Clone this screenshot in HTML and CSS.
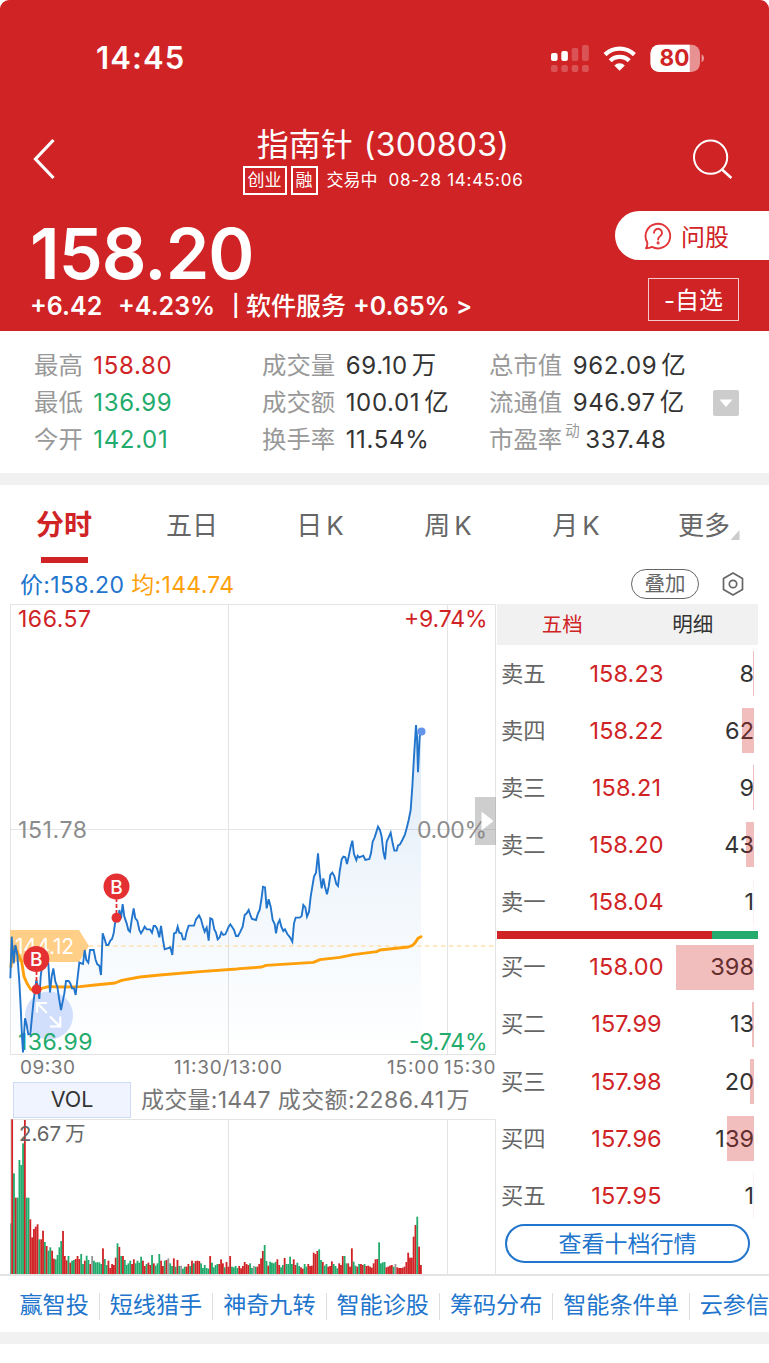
FILE: index.html
```html
<!DOCTYPE html>
<html lang="zh-CN">
<head>
<meta charset="utf-8">
<title>指南针 (300803)</title>
<link rel="stylesheet" href="styles.css">
</head>
<body>
<div class="screen">
  <header class="hero">
    <div class="status">
      <span class="clock">14:45</span>
      <svg class="status-icons" width="154" height="30" viewBox="550 42 154 30">
        <g fill="#fff">
          <rect x="551" y="52" width="6.6" height="8" rx="2"/>
          <rect x="561.3" y="50" width="6.6" height="10" rx="2"/>
          <g opacity=".22">
            <rect x="571.7" y="47" width="6.6" height="13" rx="2"/>
            <rect x="582" y="44" width="6.8" height="16" rx="2"/>
            <rect x="551" y="64" width="6.6" height="7" rx="2"/>
            <rect x="561.3" y="64" width="6.6" height="7" rx="2"/>
            <rect x="571.7" y="64" width="6.6" height="7" rx="2"/>
            <rect x="582" y="64" width="6.8" height="7" rx="2"/>
          </g>
          <path d="M614.3 64.4a7.6 7.6 0 0 1 10.500 0L619.600 69.800z"/>
        </g>
        <g fill="none" stroke="#fff" stroke-width="4.300">
          <path d="M605 53.600a21.200 21.200 0 0 1 29.400 0"/>
          <path d="M610.200 59.700a13.600 13.600 0 0 1 19 0"/>
        </g>
        <clipPath id="battery"><rect x="650.5" y="43.7" width="49.5" height="27.2" rx="8.5"/></clipPath>
        <g clip-path="url(#battery)" fill="#fff">
          <rect x="650" y="43" width="50" height="28" opacity=".5"/>
          <rect x="650" y="43" width="39.7" height="28"/>
        </g>
        <path d="M701.6 53.2q2.4 1.2 2.4 4t-2.4 4z" fill="#fff" opacity=".55"/>
        <text x="659.5" y="65.3" textLength="30" class="battery-text">80</text>
      </svg>
    </div>
    <div class="nav">
      <svg class="back" width="24" height="42" viewBox="0 0 24 42"><path d="M20.500 2L2.500 21L20.500 40" fill="none" stroke="#fff" stroke-width="3.200"/></svg>
      <div class="title">
        <h1>指南针 <span>(300803)</span></h1>
        <div class="subtitle"><span class="tag">创业</span><span class="tag">融</span><span class="state">交易中</span><span class="stamp">08-28 14:45:06</span></div>
      </div>
      <svg class="search" width="42" height="42" viewBox="0 0 42 42" fill="none" stroke="#fff" stroke-width="2"><circle cx="18.6" cy="18.2" r="16.6"/><path d="M30 30.5L39.4 39" stroke-width="2.5"/></svg>
    </div>
    <div class="quote">
      <div class="quote-left">
        <div class="last">158.20</div>
        <div class="change"><span class="c1">+6.42</span><span class="c2">+4.23%</span><span class="c3">|</span><span class="c4">软件服务</span><span class="c5">+0.65%</span><span class="c6">&gt;</span></div>
      </div>
      <div class="quote-right">
        <div class="ask">
          <svg width="28" height="28" viewBox="0 0 28 28" fill="none" stroke="#e23538" stroke-width="1.9"><path d="M3.2 20.2A12.3 12.3 0 1 1 8 24.9C6.400 25.700 4.500 26.200 2 26.200C3.200 24.500 3.600 22.500 3.200 20.200z" stroke-linejoin="round"/><path d="M10 10.700a4 4 0 1 1 6.100 3.500c-1.500.9-2 1.500-2 3.300" stroke-linecap="round"/><circle cx="14.100" cy="20.900" r=".6" fill="#e23538"/></svg>
          <span>问股</span>
        </div>
        <div class="watch">-自选</div>
      </div>
    </div>
  </header>

  <section class="stats">
    <div class="stat"><span>最高</span><b class="up">158.80</b></div>
    <div class="stat"><span>成交量</span><b>69.10<i>万</i></b></div>
    <div class="stat"><span>总市值</span><b>962.09<i>亿</i></b></div>
    <div class="stat"><span>最低</span><b class="down">136.99</b></div>
    <div class="stat"><span>成交额</span><b>100.01<i>亿</i></b></div>
    <div class="stat"><span>流通值</span><b>946.97<i>亿</i></b>
      <svg class="expand" width="26" height="26" viewBox="0 0 26 26"><rect width="26" height="26" rx="2" fill="#ccc"/><path d="M6.500 9.500h13l-6.500 7.500z" fill="#fff"/></svg></div>
    <div class="stat"><span>今开</span><b class="down">142.01</b></div>
    <div class="stat"><span>换手率</span><b>11.54%</b></div>
    <div class="stat"><span>市盈率</span><sup>动</sup><b class="pe">337.48</b></div>
  </section>

  <nav class="tabs">
    <div class="tab active"><span>分时</span></div>
    <div class="tab"><span>五日</span></div>
    <div class="tab"><span>日<em>K</em></span></div>
    <div class="tab"><span>周<em>K</em></span></div>
    <div class="tab"><span>月<em>K</em></span></div>
    <div class="tab more"><span>更多</span><svg width="10" height="10" viewBox="0 0 10 10"><path d="M9.500 0V10H.5z" fill="#ccc"/></svg></div>
  </nav>

  <div class="legend">
    <span class="price">价:158.20</span><span class="avg">均:144.74</span>
    <span class="overlay">叠加</span>
    <svg width="22" height="24" viewBox="0 0 22 24" fill="none" stroke="#666" stroke-width="1.700"><path d="M11 1L20.500 6.500V17.500L11 23L1.500 17.500V6.500z" stroke-linejoin="round"/><circle cx="11" cy="12" r="3.700"/></svg>
  </div>

  <main class="market">
    <div class="charts">
      <svg class="price-chart" width="497" height="478" viewBox="0 603 497 478">
        <defs><linearGradient id="area" gradientUnits="userSpaceOnUse" x1="0" y1="725" x2="0" y2="1054">
          <stop offset="0" stop-color="#1f76cf" stop-opacity=".16"/><stop offset=".5" stop-color="#1f76cf" stop-opacity=".06"/><stop offset="1" stop-color="#1f76cf" stop-opacity="0"/></linearGradient></defs>
        <g stroke="#e4e4e4" fill="none">
          <rect x="10.500" y="604.500" width="485" height="450"/>
          <path d="M228.500 604V1055M447.500 604V1055M10 829.500H496"/>
        </g>
        <polygon id="price-area" fill="url(#area)"/>
        <g class="label">
          <text x="18" y="627" textLength="73" class="up">166.57</text>
          <text x="404" y="627" textLength="83.500" class="up">+9.74%</text>
          <text x="18" y="838" textLength="69" class="flat">151.78</text>
          <text x="417" y="838" textLength="70" class="flat">0.00%</text>
          <text x="409" y="1050" textLength="78.500" class="down">-9.74%</text>
        </g>
        <path d="M10 930H79L89 946L79 962H10z" fill="#ffce87"/>
        <text x="15" y="954" textLength="59" class="cost">144.12</text>
        <path d="M89 946H496" stroke="#ffe0ae" stroke-width="1.500" stroke-dasharray="4.500 3.500"/>
        <circle cx="49" cy="1015.500" r="24" fill="#c9d8fb" opacity=".85"/>
        <text x="18" y="1050" textLength="74.500" class="label down">136.99</text>
        <polyline id="avg-line" fill="none" stroke="#ff9f0a" stroke-width="2.900" stroke-linejoin="round" stroke-linecap="round"/>
        <polyline id="price-line" fill="none" stroke="#2175cc" stroke-width="1.900"/>
        <g stroke="#fff" stroke-width="2.200" fill="none">
          <path d="M47 1013L37.500 1003.500M47 1003H37V1012.500M50 1016.500L59.500 1026M50 1026.500H60.300V1016.500"/>
        </g>
        <circle cx="421.500" cy="731.500" r="4" fill="#6495ed"/>
        <g stroke="#e53033" stroke-width="1.800" stroke-dasharray="4 2"><path d="M36.500 971V988M116.500 898V916"/></g>
        <g fill="#e53033">
          <circle cx="36.300" cy="959" r="13"/><circle cx="36.500" cy="989.500" r="5"/>
          <circle cx="116.500" cy="886.500" r="13"/><circle cx="116.500" cy="917.700" r="5"/>
        </g>
        <g class="marker"><text x="36.300" y="966">B</text><text x="116.500" y="893.500">B</text></g>
        <rect x="475" y="797" width="21" height="48" fill="#8a8a8a" fill-opacity=".42"/>
        <path d="M481.500 811.500L493.500 821L481.500 830.500z" fill="#fff"/>
        <g class="axis">
          <text x="20" y="1074" textLength="55">09:30</text>
          <text x="174" y="1074" textLength="108">11:30/13:00</text>
          <text x="387" y="1074" textLength="52">15:00</text>
          <text x="444" y="1074" textLength="51.500">15:30</text>
        </g>
      </svg>
      <div class="vol-head"><span class="vol-name">VOL</span><span class="vol-a">成交量:1447</span><span class="vol-b">成交额:2286.41<i>万</i></span></div>
      <svg class="vol-chart" width="497" height="155" viewBox="0 1119 497 155">
        <path d="M10.500 1274V1119.500H495.500V1274M228.500 1119V1274M447.500 1119V1274" stroke="#e4e4e4" fill="none"/>
        <g id="volume"></g>
        <text x="19" y="1141" class="max-vol" textLength="42">2.67</text><text x="65" y="1141" class="max-vol">万</text>
      </svg>
    </div>

    <aside class="book">
      <div class="book-tabs"><span class="on">五档</span><span>明细</span></div>
      <div class="level"><span>卖五</span><b>158.23</b><strong>8</strong><i style="width:1px"></i></div>
      <div class="level"><span>卖四</span><b>158.22</b><strong>62</strong><i style="width:12px"></i></div>
      <div class="level"><span>卖三</span><b>158.21</b><strong>9</strong><i style="width:1.5px"></i></div>
      <div class="level"><span>卖二</span><b>158.20</b><strong>43</strong><i style="width:8px"></i></div>
      <div class="level"><span>卖一</span><b>158.04</b><strong>1</strong><i class="faint"></i></div>
      <div class="ratio"></div>
      <div class="level"><span>买一</span><b>158.00</b><strong>398</strong><i style="width:78px"></i></div>
      <div class="level"><span>买二</span><b>157.99</b><strong>13</strong><i style="width:2.5px"></i></div>
      <div class="level"><span>买三</span><b>157.98</b><strong>20</strong><i style="width:4px"></i></div>
      <div class="level"><span>买四</span><b>157.96</b><strong>139</strong><i style="width:27px"></i></div>
      <div class="level"><span>买五</span><b>157.95</b><strong>1</strong><i class="faint"></i></div>
      <div class="ten">查看十档行情</div>
    </aside>
  </main>

  <div class="links"><a>赢智投</a><a>短线猎手</a><a>神奇九转</a><a>智能诊股</a><a>筹码分布</a><a>智能条件单</a><a>云参信</a></div>
  <div class="band"></div>
</div>
<script src="chart.js"></script>
</body>
</html>
```

FILE: styles.css
```css
* { box-sizing: border-box; }
body {
  margin: 0;
  background: #fff;
  color: #333;
  font-family: Inter, "Noto Sans CJK SC", sans-serif;
}
.screen { width: 769px; height: 1363px; overflow: hidden; }
h1, b, strong, i, em { font-weight: 400; font-style: normal; margin: 0; }
svg { display: block; flex: none; }
.up { color: #d02325; fill: #d02325; }
.down { color: #22ab6c; fill: #22ab6c; }
.flat { fill: #8c8c8c; }

.hero { height: 331px; background: #d02325; color: #fff; border-radius: 9px 9px 0 0; overflow: hidden; }
.status { height: 115px; padding: 0 65px 0 96px; display: flex; justify-content: space-between; align-items: center; }
.clock { font-size: 31px; font-weight: 600; letter-spacing: 1.100px; line-height: 40px; }
.status-icons { overflow: visible; }
.battery-text { font-size: 22.500px; font-weight: 700; fill: #d02325; }

.nav { height: 96px; padding: 0 35px 0 33px; display: flex; justify-content: space-between; align-items: flex-start; }
.back { margin-top: 23px; }
.search { margin-top: 24px; }
.title { display: flex; flex-direction: column; align-items: center; padding-top: 7px; margin-left: 17px; }
.title h1 { font-size: 32px; line-height: 45px; height: 44px; white-space: nowrap; }
.title h1 span { font-weight: 400; letter-spacing: .3px; margin-left: 2px; }
.subtitle { display: flex; align-items: center; height: 29px; font-size: 17px; white-space: nowrap; }
.tag { border: 2px solid #fff; height: 29px; line-height: 25px; padding: 0 3px; margin-right: 4px; }
.state { margin-left: 5px; line-height: 27px; }
.stamp { margin-left: 11px; letter-spacing: .75px; line-height: 27px; }

.quote { display: flex; justify-content: space-between; height: 120px; }
.quote-left { padding-left: 30px; }
.last { font-size: 70px; font-weight: 600; line-height: 76px; margin-top: 5px; margin-bottom: -1px; letter-spacing: -.9px; }
.change { display: flex; font-size: 25px; font-weight: 600; line-height: 30px; white-space: nowrap; }
.c1 { width: 71px; }
.c2 { margin-left: 17px; width: 97px; }
.c3 { margin-left: 17px; width: 8px; font-size: 21px; }
.c4 { margin-left: 6px; width: 100px; font-weight: 500; }
.c5 { margin-left: 7px; width: 96px; }
.c6 { margin-left: 7px; font-size: 24px; }
.quote-right { display: flex; flex-direction: column; align-items: flex-end; }
.ask { width: 154px; height: 49px; border-radius: 25px 0 0 25px; background: #fff; color: #d02325; display: flex; align-items: center; gap: 9px; padding-left: 29px; font-size: 24px; }
.watch { width: 91px; height: 43px; margin: 18px 30px 0 0; border: 1px solid #f5c9c9; font-size: 24px; line-height: 43px; text-align: center; }

.stats { height: 142px; padding: 16px 0 0 34px; display: grid; grid-template-columns: 228px 227px 280px; grid-auto-rows: 37px; align-content: start; }
.stat { display: flex; align-items: center; font-size: 24.400px; line-height: 37px; color: #999; white-space: nowrap; }
.stat b { font-size: 24px; margin-left: 10.500px; color: #333; letter-spacing: .65px; }
.stat b.up { color: #d02325; }
.stat b.down { color: #22ab6c; }
.stat i { margin-left: 4px; font-size: 24.500px; }
.stat sup { font-size: 14.500px; margin: 3px 0 0 3px; line-height: 1; align-self: flex-start; }
.stat b.pe { margin-left: 5.500px; }
.expand { margin-left: auto; margin-right: 30px; order: 3; }

.tabs { height: 93px; border-top: 12px solid #f1f1f1; display: grid; grid-template-columns: repeat(6, 128px); }
.tab { height: 80px; display: flex; justify-content: center; font-size: 26px; line-height: 81px; color: #666; white-space: nowrap; }
.tab em { margin-left: 4px; }
.tab.active { font-size: 28px; font-weight: 700; color: #d02325; background: linear-gradient(#d02325, #d02325) center 72px / 47px 6px no-repeat; }
.more svg { margin: 45px -10px 0 0; }

.legend { height: 37px; padding: 0 25px 0 20px; display: flex; align-items: center; font-size: 23px; line-height: 36px; white-space: nowrap; }
.legend span { letter-spacing: .3px; }
.legend svg { margin-top: -2px; }
.price { color: #2175cc; }
.avg { color: #ff9f0a; margin-left: 7px; }
.legend .overlay { margin-top: -2px; margin-left: auto; margin-right: 23px; width: 68px; height: 30px; border: 1.500px solid #666; border-radius: 15px; font-size: 20.500px; line-height: 27px; text-align: center; color: #666; letter-spacing: 0; }

.market { display: flex; height: 671px; }
.charts { width: 497px; }
.label { font-size: 23px; }
.cost { font-size: 21px; fill: #fff; }
.marker { font-size: 19px; font-weight: 500; fill: #fff; text-anchor: middle; }
.axis { font-size: 19px; fill: #777; }
.max-vol { font-size: 20.500px; fill: #666; }
.vol-head { height: 38px; display: flex; align-items: center; font-size: 23px; line-height: 36px; color: #777; white-space: nowrap; padding-left: 13px; }
.vol-name { width: 118px; height: 36px; border: 1px solid #cfdcf8; background: #eff4fe; color: #333; font-size: 21.500px; text-align: center; line-height: 33px; }
.vol-a { margin-left: 10px; letter-spacing: .25px; }
.vol-b { margin-left: 7px; letter-spacing: .45px; }
.vol-b i { margin-left: 2px; }

.book { width: 261px; }
.book-tabs { height: 41px; margin-top: 1px; background: #f1f1f1; display: grid; grid-template-columns: 1fr 1fr; text-align: center; font-size: 20.500px; line-height: 41px; }
.book-tabs .on { color: #d02325; }
.level { position: relative; height: 57.150px; padding: 0 4px; display: grid; grid-template-columns: 70px 111px 1fr; align-items: center; font-size: 23.500px; line-height: 56px; }
.level span { font-size: 22.300px; color: #666; }
.level b { color: #d02325; text-align: center; letter-spacing: .1px; }
.level strong { text-align: right; }
.level i { position: absolute; right: 4px; top: 6px; height: 45px; background: rgba(208, 35, 37, .3); }
.level i.faint { width: 1px; opacity: .25; }
.ratio { height: 8px; background: linear-gradient(90deg, #d02325 215.500px, #22ab6c 215.500px); }
.ten { width: 245px; height: 39px; margin: 0 0 0 8px; border: 2px solid #2175cc; border-radius: 20px; color: #2175cc; font-size: 23px; line-height: 36px; text-align: center; }

.links { height: 58px; border-top: 2px solid #e4e4e4; padding-left: 9.500px; display: flex; align-items: center; }
.links a { flex: none; padding: 0 10px; border-right: 1px solid #ddd; height: 27px; line-height: 25px; margin-top: 4px; font-size: 23.100px; color: #2175cc; white-space: nowrap; }
.links a:last-child { border: 0; }
.band { height: 12px; background: #f1f1f1; }
```

FILE: chart.js
```js
// Chart samples are stored on a fine grid: three units per CSS pixel.
const GRID = 3;
const morning = "31,835 35,710 41,790 46,735 52,765 58,845 62,920 66,1010 69,1057 71,1020 75,955 80,975 85,1003 91,1003 95,960 100,910 105,870 109,840 114,860 118,897 122,830 127,790 133,760 140,775 145,790 150,877 155,830 160,805 166,845 172,860 178,900 183,930 188,905 193,880 198,843 206,843 211,850 216,865 222,865 227,885 232,840 238,788 249,792 254,750 259,780 265,788 270,750 281,750 287,780 292,793 298,797 303,825 308,700 314,718 319,735 325,735 331,722 336,717 341,700 345,670 350,650 355,660 358,630 363,655 368,612 373,650 380,670 385,690 390,695 395,660 401,625 406,655 412,662 418,690 423,700 429,690 434,680 440,688 450,688 456,698 461,678 466,678 471,685 478,712 483,678 489,720 494,748 511,742 517,765 522,700 528,698 533,680 538,698 544,700 549,718 555,718 560,695 566,677 582,677 588,658 597,646 603,658 609,680 614,695 620,683 626,722 631,655 637,658 643,688 648,698 653,718 659,712 664,697 670,705 676,703 681,692 686,680 691,673 697,682 702,690 708,708 714,708";
const afternoon = "0,697 8,680 14,645 20,640 26,630 32,648 36,657 48,660 54,640 59,630 64,600 69,560 75,562 80,625 86,598 92,620 98,660 104,672 108,700 113,672 119,660 124,680 130,693 135,688 142,702 150,712 157,725 162,670 167,653 179,653 185,648 190,615 196,622 201,650 207,635 212,590 222,530 228,518 234,460 239,520 245,565 250,535 255,560 261,583 266,560 271,525 277,518 283,528 289,552 294,558 299,515 305,478 310,470 316,472 321,492 326,470 332,440 337,422 342,462 349,480 353,467 358,472 370,467 376,480 388,477 393,460 398,425 404,412 414,380 420,390 425,410 430,455 435,478 440,425 446,412 452,398 458,430 463,452 470,452 474,437 480,433 487,420 495,403 500,385 506,360 512,330 517,260 522,170 528,75 531,110 534,217 539,110 543,95";
const avgMorning = "33,800 38,745 46,740 55,765 65,785 72,830 82,852 92,868 109,875 125,865 145,860 190,861 240,860 285,855 345,849 365,841 420,831 480,825 600,815 710,807";
const avgAfternoon = "0,806 65,801 78,796 220,787 240,779 300,772 340,764 410,755 420,750 505,741 518,736 524,730 534,715 543,710";
const parse = (text, dx) => text.split(" ").map(pair => {
  const [x, y] = pair.split(",").map(Number);
  return [(x + dx) / GRID, 700 + y / GRID];
});
const price = [...parse(morning, 0), ...parse(afternoon, 720)];
const avg = [...parse(avgMorning, 0), ...parse(avgAfternoon, 720)];
const points = list => list.map(p => p.map(n => n.toFixed(2)).join(",")).join(" ");
document.getElementById("price-line").setAttribute("points", points(price));
document.getElementById("avg-line").setAttribute("points", points(avg));
document.getElementById("price-area").setAttribute("points", points([[price[0][0], 1054], ...price, [421, 1054]]));

// One bar per minute: top edge and direction (r rise, g fall, n unchanged).
const volume = "520g 208r 370g 443r 443g 330g 345g 280g 210r 443g 443g 508r 562r 537r 530r 523r 568g 568r 542r 576g 588r 602g 592g 602r 626r 628g 615g 592g 573g 543r 618r 631r 618g 638r 632g 630g 627r 618r 627r 612g 642g 632r 617g 630g 642r 618n 632g 637g 637g 637g 642g 595r 627g 645g 632r 654r 642r 645r 623r 580g 591r 618g 618r 630g 645g 640g 632g 642r 628r 640g 632g 638g 620g 632r 648r 642g 638r 645r 615g 640r 647g 640g 612g 632r 648r 632g 630r 625n 640g 648g 625r 650g 630r 648g 647n 656g 650g 650r 642r 648g 632r 640g 633r 632r 633r 640g 654g 645g 654g 656g 618r 638g 652g 645g 642g 642r 628r 640r 652g 636r 650r 618r 650g 652g 648g 654g 648r 655r 648r 636r 642r 645r 640g 654g 648n 650g 650r 642r 625r 603r 585g 633g 647r 635g 638g 640g 636g 628r 645r 652g 645g 624r 642g 642g 620g 642g 628r 645r 638g 648g 652r 656r 642g 650g 642r 648r 647r 608r 612r 603r 598g 630g 636r 647g 642g 650r 648r 634r 642g 648g 655g 640r 645r 618r 618g 640g 640r 650r 595r 635g 647g 650r 642g 642r 645r 642g 648r 647r 650r 653r 640r 628r 627r 577g 640g 637g 636g 652r 650r 647r 645r 650g 642n 652r 654r 654r 653r 650r 636r 608r 623r 623r 560r 525r 500g 590r 645r".split(" ");
const colors = { r: "#d02325", g: "#22ab6c", n: "#999999" };
const group = document.getElementById("volume");
volume.forEach((entry, i) => {
  const top = parseInt(entry, 10);
  const left = Math.max(31, 31 + 5.45 * (i - 0.5));
  const right = 31 + 5.45 * (i + 0.5);
  const bar = document.createElementNS("http://www.w3.org/2000/svg", "rect");
  bar.setAttribute("x", left / GRID);
  bar.setAttribute("width", (right - left) / GRID);
  bar.setAttribute("y", 1050 + top / GRID);
  bar.setAttribute("height", (672 - top) / GRID);
  bar.setAttribute("fill", colors[entry.slice(-1)]);
  group.appendChild(bar);
});
```
